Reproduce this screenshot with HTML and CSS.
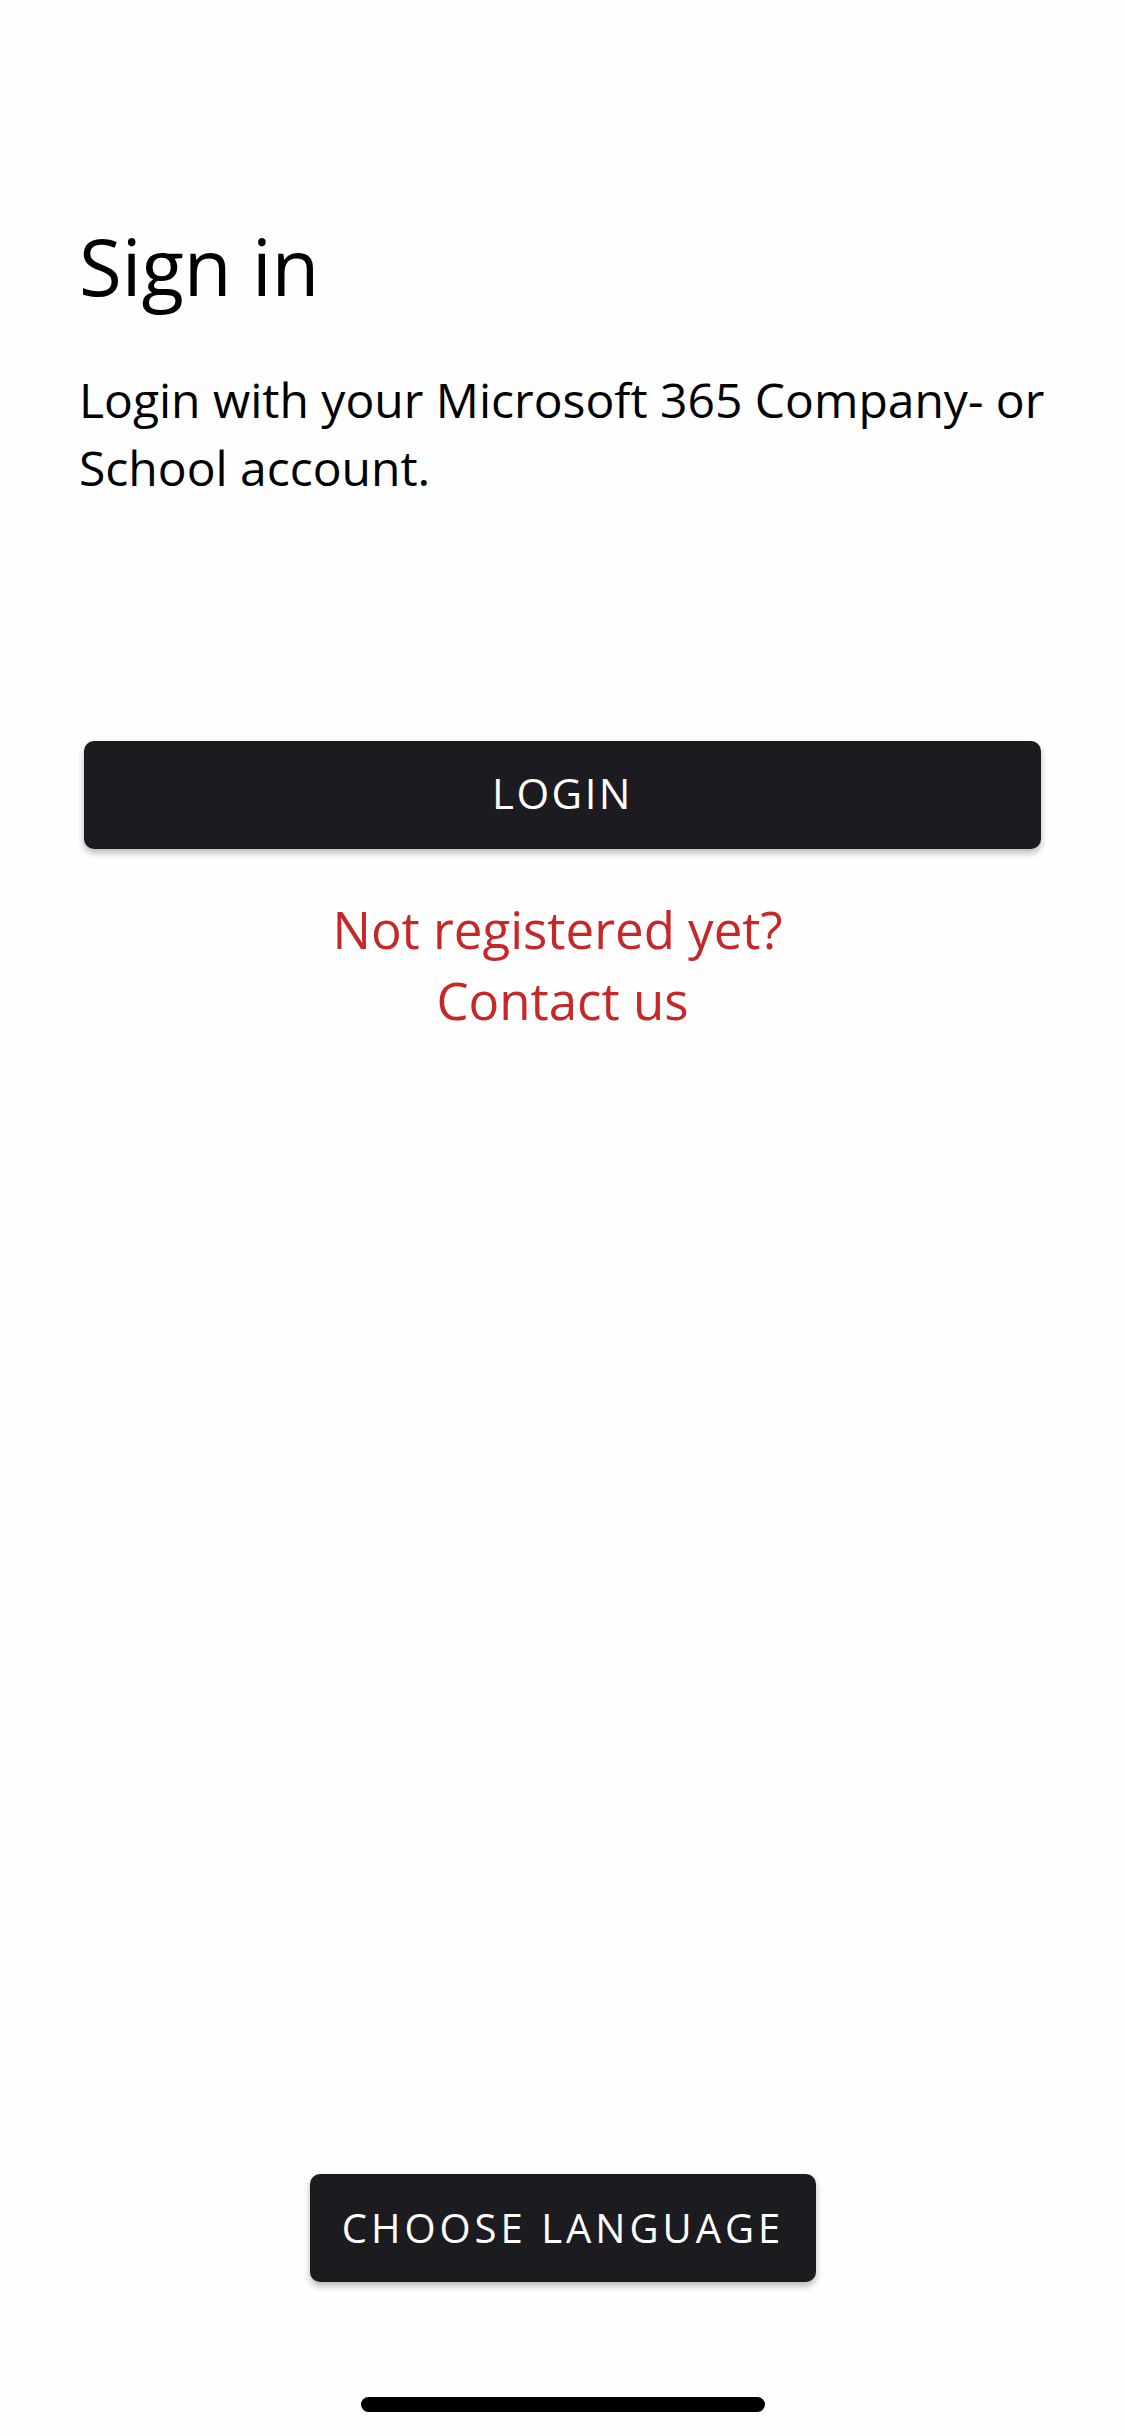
FILE: index.html
```html
<!DOCTYPE html>
<html lang="en">
<head>
<meta charset="utf-8">
<title>Sign in</title>
<link rel="stylesheet" href="styles.css">
</head>
<body>
<div class="page">
  <main class="content">
    <h1 class="title">Sign in</h1>
    <p class="intro">Login with your Microsoft 365 Company- or School account.</p>
    <button class="btn btn-login" type="button">LOGIN</button>
    <a class="register" href="#"><span class="register-line">Not registered yet?</span><br>Contact us</a>
  </main>
  <footer class="footer">
    <button class="btn btn-lang" type="button">CHOOSE LANGUAGE</button>
    <div class="home-indicator"></div>
  </footer>
</div>
</body>
</html>
```

FILE: styles.css
```css
* { box-sizing: border-box; }
html, body { margin: 0; padding: 0; background: #fefefe; }
body { font-family: "Open Sans", "Noto Sans", sans-serif; color: #000; }

.page {
  width: 1125px;
  height: 2436px;
  display: flex;
  flex-direction: column;
}

.content {
  display: flex;
  flex-direction: column;
  padding: 216px 79px 0 79px;
}

.title {
  margin: 0;
  font-size: 78px;
  line-height: 100px;
  font-weight: 400;
}

.intro {
  margin: 50px 0 0 0;
  font-size: 48px;
  line-height: 68px;
  font-weight: 400;
}

.btn {
  border: none;
  background: #1c1b20;
  color: #fff;
  font-family: "Open Sans", "Noto Sans", sans-serif;
  font-weight: 400;
  border-radius: 10px;
  box-shadow: 0 4px 7px rgba(0, 0, 0, 0.28);
  cursor: pointer;
}

.btn-login {
  margin: 239px 0 0 5px;
  width: 957px;
  height: 108px;
  padding: 0 0 6px 0;
  font-size: 42px;
  letter-spacing: 2.5px;
}

.register {
  margin-top: 45px;
  text-align: center;
  color: #c62828;
  text-decoration: none;
  font-size: 51px;
  line-height: 71px;
}

.register-line {
  padding-right: 10px;
}

.footer {
  margin-top: auto;
  display: flex;
  flex-direction: column;
  align-items: center;
}

.btn-lang {
  width: 506px;
  height: 108px;
  padding: 0 0 2px 0;
  font-size: 40px;
  letter-spacing: 4px;
  margin-left: 1px;
}

.home-indicator {
  margin-top: 115px;
  margin-bottom: 24px;
  width: 404px;
  height: 15px;
  border-radius: 8px;
  background: #000;
}
```
